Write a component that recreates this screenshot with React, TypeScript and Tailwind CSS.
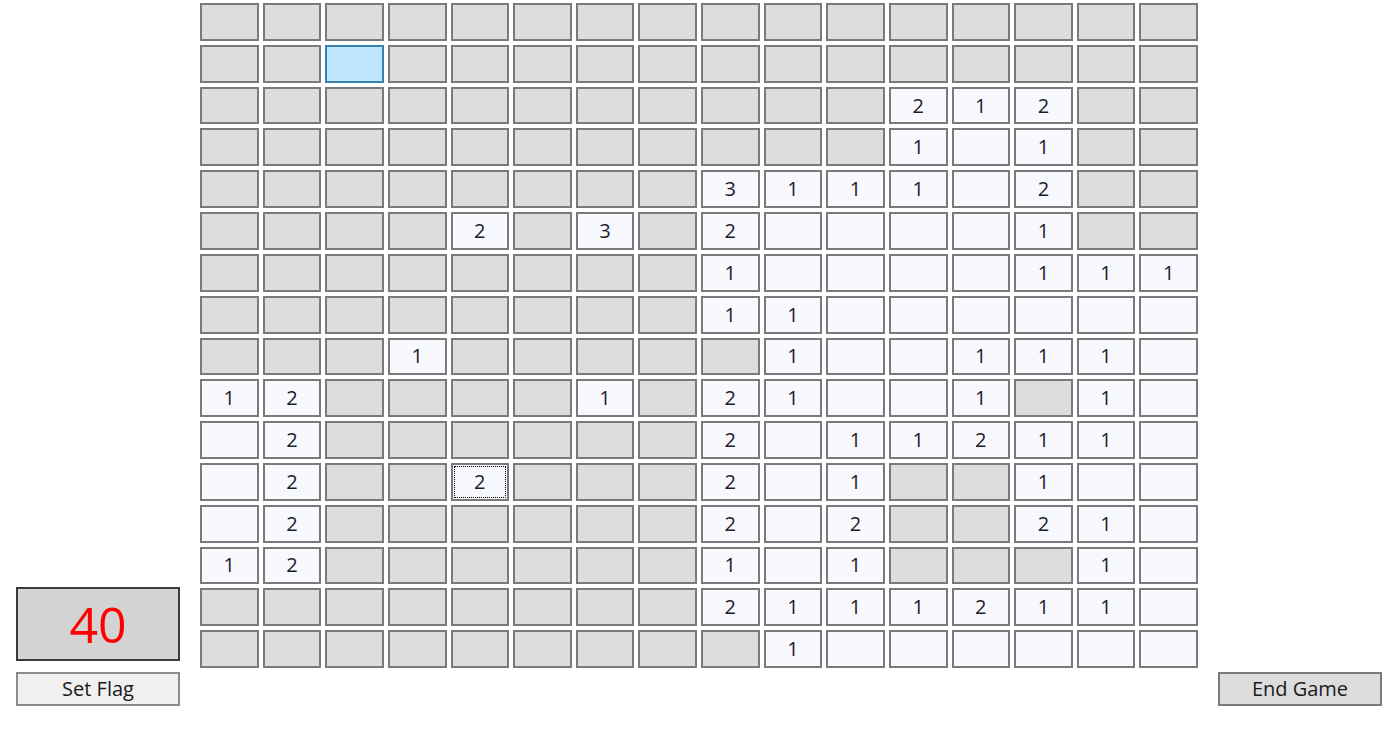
import React from 'react';

// '#' = covered, '.' = opened empty, digit = opened with count
const board = [
  '################',
  '################',
  '###########212##',
  '###########1.1##',
  '########3111.2##',
  '####2#3#2....1##',
  '########1....111',
  '########11......',
  '###1#####1..111.',
  '12####1#21..1#1.',
  '.2######2.11211.',
  '.2##2###2.1##1..',
  '.2######2.2##21.',
  '12######1.1###1.',
  '########2111211.',
  '#########1......',
];

const font = { fontFamily: '"Open Sans", "Noto Sans", sans-serif' };

function Cell({ ch, hover, focus }: { ch: string; hover: boolean; focus: boolean }) {
  const covered = ch === '#';
  const base = 'relative flex items-center justify-center border-2 text-[20px] text-[#1c1c28]';
  const look = hover
    ? 'bg-[#bee6fd] border-[#3c7fb1]'
    : covered
      ? 'bg-[#dddddd] border-[#7a7a7a]'
      : 'bg-[#f8f8ff] border-[#7a7a7a]';
  return (
    <div className={`${base} ${look}`}>
      {focus && <div className="absolute inset-[1px] border border-dotted border-black" />}
      {!covered && ch !== '.' ? ch : ''}
    </div>
  );
}

export default function App() {
  return (
    <div className="w-[1399px] h-[733px] flex bg-white overflow-hidden" style={font}>
      <div className="w-[200px] shrink-0 flex flex-col justify-end pl-[16px] pb-[27px]">
        <div className="w-[164px] h-[74px] bg-[#d3d3d3] border-2 border-[#3a3a3a] flex items-center justify-center text-[50px] leading-none text-[#ff0000]">
          40
        </div>
        <button className="mt-[11px] w-[164px] h-[34px] bg-[#f0f0f0] border-2 border-[#8c8c8c] text-[20px] leading-none text-[#1a1a1a]">
          Set Flag
        </button>
      </div>
      <div className="mt-[3px] w-[998px] h-[665px] shrink-0 grid grid-cols-16 grid-rows-16 gap-x-[4px] gap-y-[4px]">
        {board.map((row, r) =>
          row.split('').map((ch, c) => (
            <Cell key={`${r}-${c}`} ch={ch} hover={r === 1 && c === 2} focus={r === 11 && c === 4} />
          ))
        )}
      </div>
      <div className="flex-1 flex flex-col justify-end pl-[20px] pb-[27px]">
        <button className="w-[164px] h-[34px] bg-[#dddddd] border-2 border-[#7a7a7a] text-[20px] leading-none text-[#1a1a1a]">
          End Game
        </button>
      </div>
    </div>
  );
}
